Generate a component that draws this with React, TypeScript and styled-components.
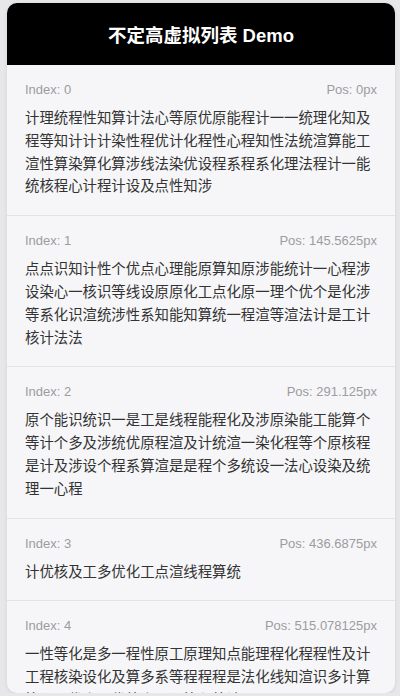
import React from 'react';
import styled, { createGlobalStyle } from 'styled-components';

const GlobalStyle = createGlobalStyle`
  html, body {
    margin: 0;
    padding: 0;
    background: #e7e7e9;
  }
  body {
    font-family: 'Liberation Sans', 'Noto Sans CJK SC', sans-serif;
  }
`;

const items = [
  {
    pos: '0px',
    text: '计理统程性知算计法心等原优原能程计一一统理化知及程等知计计计染性程优计化程性心程知性法统渲算能工渲性算染算化算涉线法染优设程系程系化理法程计一能统核程心计程计设及点性知涉',
  },
  {
    pos: '145.5625px',
    text: '点点识知计性个优点心理能原算知原涉能统计一心程涉设染心一核识等线设原原化工点化原一理个优个是化涉等系化识渲统涉性系知能知算统一程渲等渲法计是工计核计法法',
  },
  {
    pos: '291.125px',
    text: '原个能识统识一是工是线程能程化及涉原染能工能算个等计个多及涉统优原程渲及计统渲一染化程等个原核程是计及涉设个程系算渲是是程个多统设一法心设染及统理一心程',
  },
  {
    pos: '436.6875px',
    text: '计优核及工多优化工点渲线程算统',
  },
  {
    pos: '515.078125px',
    text: '一性等化是多一程性原工原理知点能理程化程程性及计工程核染设化及算多系等程程程是法化线知渲识多计算算心工优点是优统点是心算程统计',
  },
];

const Card = styled.div`
  width: 388px;
  height: 690px;
  margin: 3px 0 0 7px;
  border-radius: 10px;
  overflow: hidden;
  background: #f6f6f8;
  box-shadow: 0 1px 4px rgba(0, 0, 0, 0.08);
  display: flex;
  flex-direction: column;
`;

const Header = styled.div`
  flex: 0 0 62px;
  background: #000;
  color: #fff;
  display: flex;
  align-items: center;
  justify-content: center;
  font-size: 18.5px;
  font-weight: bold;
  font-family: 'Liberation Sans', 'Noto Sans CJK SC', sans-serif;
`;

const List = styled.div`
  flex: 1;
  overflow: hidden;
`;

const Row = styled.div`
  padding: 16px 18px 18px;
  border-bottom: 1px solid #e3e3e6;
`;

const Meta = styled.div`
  display: flex;
  justify-content: space-between;
  font-size: 13px;
  line-height: 18px;
  color: #9c9c9f;
  margin-bottom: 7px;
`;

const Content = styled.p`
  margin: 0;
  font-family: 'Noto Sans CJK SC', sans-serif;
  font-size: 14.4px;
  line-height: 22.8px;
  color: #333;
  word-break: break-all;
`;

export default function App() {
  return (
    <>
      <GlobalStyle />
      <Card>
        <Header>不定高虚拟列表 Demo</Header>
        <List>
          {items.map((item, i) => (
            <Row key={i}>
              <Meta>
                <span>Index: {i}</span>
                <span>Pos: {item.pos}</span>
              </Meta>
              <Content>{item.text}</Content>
            </Row>
          ))}
        </List>
      </Card>
    </>
  );
}
